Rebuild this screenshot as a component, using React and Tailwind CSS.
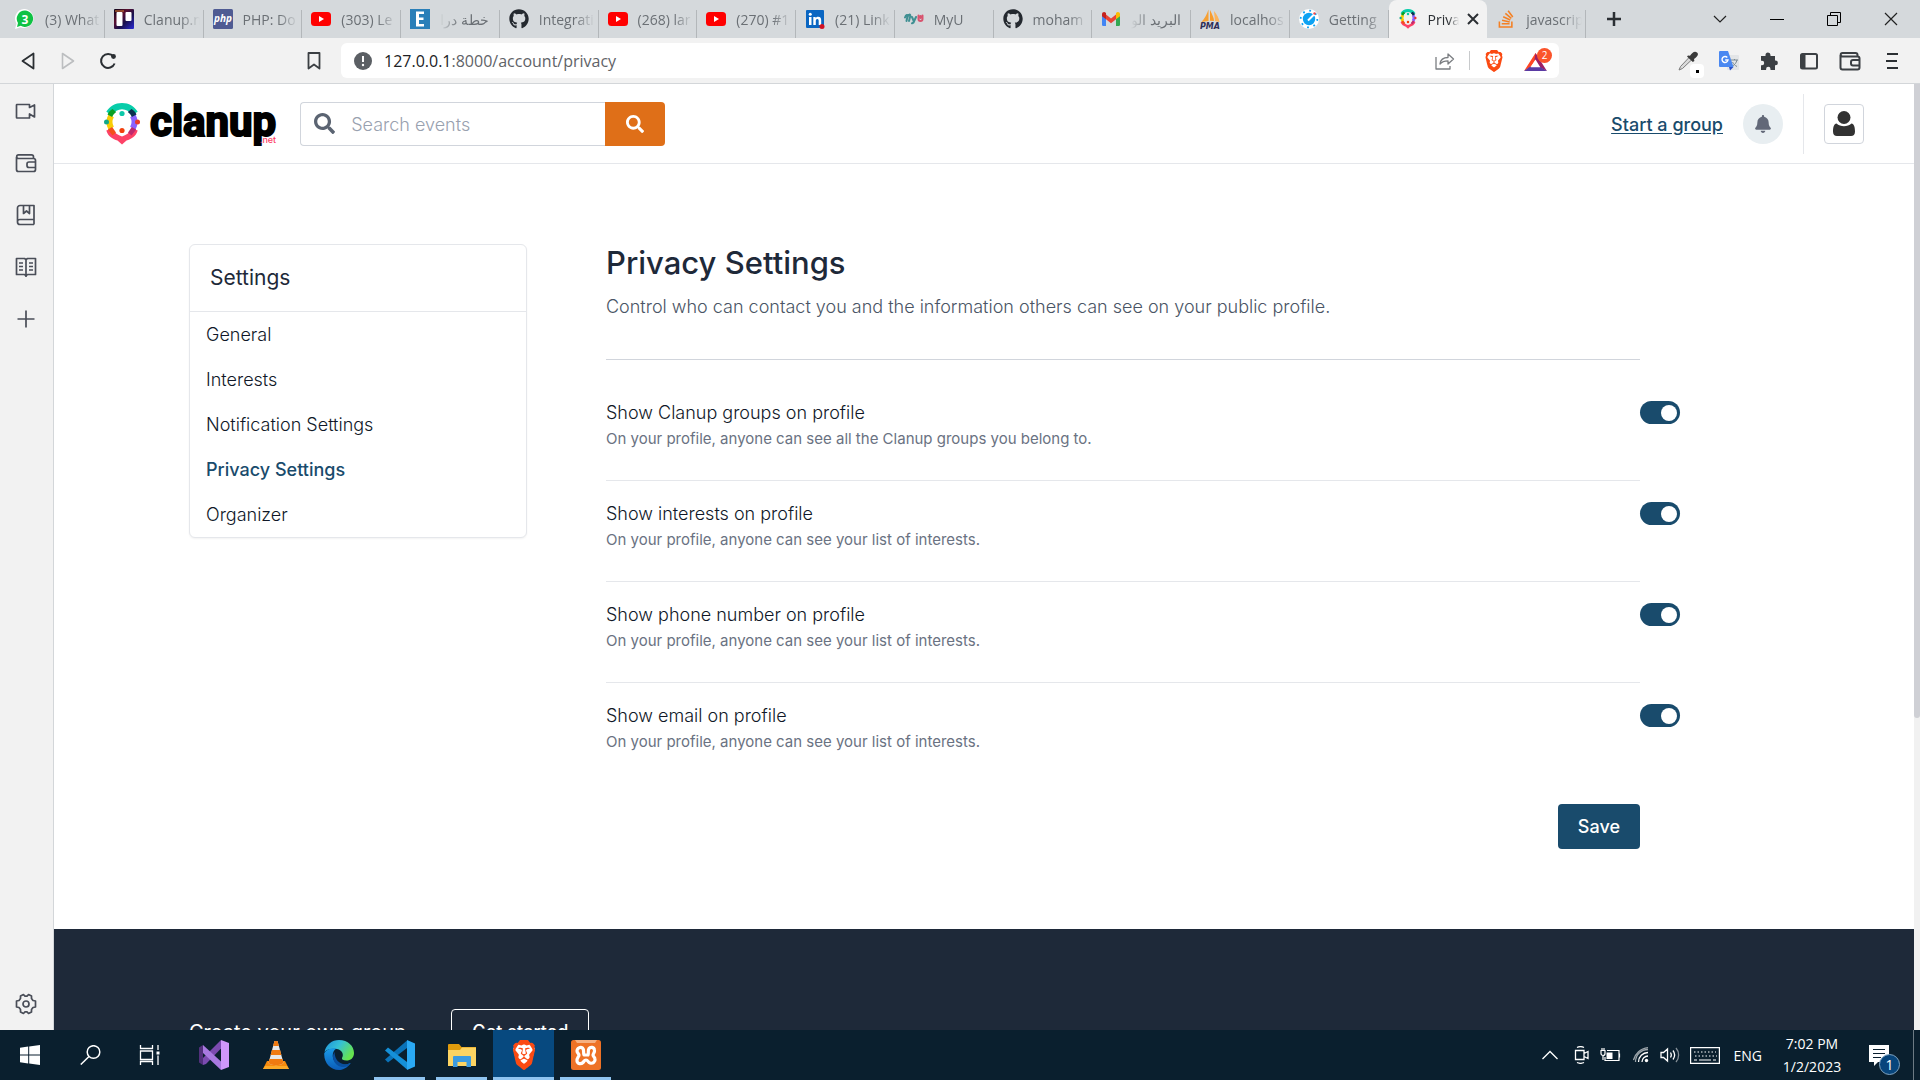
import React from 'react';
import { FaGithub, FaStackOverflow, FaSearch, FaBell } from 'react-icons/fa';
import { SiBrave } from 'react-icons/si';

/* ---------- brand marks ---------- */

function ClanupMark({ className }) {
  return (
    <svg viewBox="0 0 36 42" className={className} fill="none" aria-hidden="true">
      <path d="M7.200 12.800 A12.500 12.500 0 0 0 7.200 25.200" stroke="#f8cd05" strokeWidth="6" />
      <path d="M28.800 12.800 A12.500 12.500 0 0 1 28.800 25.200" stroke="#8a62ff" strokeWidth="6" />
      <path d="M2.300 8.800 C6 3 11 0 18 0 C25 0 30 3 33.700 8.800 L28 12 C25.500 8.500 22 6.200 18 6.200 C14 6.200 10.500 8.500 8 12Z" fill="#08cdaa" />
      <path d="M8.500 6 L12.200 9 C10 10.500 9.200 12 8.200 14 L3.500 11.500 C4.500 9 6.500 7 8.500 6Z" fill="#0b9f22" />
      <path d="M27.500 6 L23.800 9 C26 10.500 26.800 12 27.800 14 L32.500 11.500 C31.500 9 29.500 7 27.500 6Z" fill="#0a3050" />
      <path d="M2.300 27.500 L8 25.500 C10.500 30 14 32 18 33.500 C22 32 25.500 30 28 25.500 L33.700 27.500 C32 33.500 27 36 22.500 37.500 L18 41.500 L13.500 37.500 C9 36 4 33.500 2.300 27.500Z" fill="#fd4267" />
      <path d="M3.800 26.500 L8.200 24 L12 29.500 L8.500 32.500Z" fill="#f4501a" />
      <path d="M32.200 26.500 L27.800 24 L24 29.500 L27.500 32.500Z" fill="#bd2a6e" />
      <circle cx="2.500" cy="19" r="2.500" fill="#12a88a" />
      <circle cx="33.500" cy="19" r="2.500" fill="#ea3a2b" />
      <circle cx="18" cy="10.500" r="2.600" fill="#0cc8a8" />
      <circle cx="18" cy="27.500" r="2.600" fill="#f2400d" />
    </svg>
  );
}

const YouTube = () => (
  <svg viewBox="0 0 20 20" className="size-5">
    <rect y="3" width="20" height="14" rx="3.500" fill="#f00" />
    <path d="M8 7 L13 10 L8 13Z" fill="#fff" />
  </svg>
);

const WhatsApp = () => (
  <svg viewBox="0 0 20 20" className="size-5">
    <path d="M10 0 A9.500 9.500 0 1 1 5.500 18.300 L0 20 L1.500 14.500 A9.500 9.500 0 0 1 10 0Z" fill="#fff" />
    <path d="M10 1.500 A8.200 8.200 0 1 1 5.800 16.800 L2 18 L3 14 A8.200 8.200 0 0 1 10 1.500Z" fill="#0fc244" />
    <text x="10" y="14.500" textAnchor="middle" fontSize="12" fontWeight="700" fill="#fff" fontFamily="Open Sans, sans-serif">3</text>
  </svg>
);

const Trello = () => (
  <svg viewBox="0 0 20 20" className="size-5">
    <defs>
      <linearGradient id="trello" x1="0" y1="0" x2="1" y2="1">
        <stop offset="0" stopColor="#0a0418" />
        <stop offset=".35" stopColor="#5a1030" />
        <stop offset=".6" stopColor="#18104a" />
        <stop offset="1" stopColor="#2a2bd8" />
      </linearGradient>
    </defs>
    <rect width="20" height="20" rx="1" fill="url(#trello)" />
    <path d="M1 1h9v2H1z" fill="#c46a2d" opacity=".6" />
    <rect x="2.500" y="3" width="6" height="14" rx="1" fill="#fff" />
    <rect x="11.500" y="3" width="6" height="9" rx="1" fill="#fff" />
  </svg>
);

const Php = () => (
  <svg viewBox="0 0 20 20" className="size-5">
    <rect width="20" height="20" rx="1.500" fill="#4f5b93" />
    <text x="10" y="13" textAnchor="middle" fontSize="10" fontWeight="700" fontStyle="italic" fill="#fff" fontFamily="Open Sans, sans-serif">php</text>
  </svg>
);

const EIcon = () => (
  <svg viewBox="0 0 20 20" className="size-5">
    <rect width="20" height="20" fill="#2a7fb8" />
    <path d="M6 2.500h8v2.500H9v3.500h4.500V11H9v4h5v2.500H6z" fill="#fff" />
  </svg>
);

const LinkedIn = () => (
  <svg viewBox="0 0 20 20" className="size-5">
    <rect x="1" y="1" width="18" height="18" rx="1" fill="#0a66c2" />
    <path d="M4 8h2.500v8H4zM8.300 8h2.400v1.200c.5-.9 1.400-1.400 2.500-1.400 2.300 0 3 1.500 3 3.600V16h-2.500v-4c0-1-.2-2-1.300-2s-1.600.8-1.600 2v4H8.300z" fill="#fff" />
    <circle cx="5.250" cy="5.300" r="1.500" fill="#fff" />
    <circle cx="17" cy="17.500" r="2.500" fill="#d11124" />
  </svg>
);

const MyU = () => (
  <svg viewBox="0 0 20 20" className="size-5" fill="none" strokeLinecap="round" strokeLinejoin="round">
    <path d="M1 8.500c1-3 3-3.500 2.500-1L2.500 12M3.500 8c1.500-3.500 3.500-3 2.500 0l-1 4M8 8l1.500 3.500M12 8l-2.500 5.500-1.500.8" stroke="#3f8f92" strokeWidth="2" />
    <path d="M14.500 6.500v3.500a2 2 0 0 0 4 0V6.500M16.500 7v2" stroke="#d8546f" strokeWidth="2" />
  </svg>
);

const Gmail = () => (
  <svg viewBox="0 0 20 20" className="size-5">
    <path d="M1 5h4v12H2.200A1.200 1.200 0 0 1 1 15.800z" fill="#4285f4" />
    <path d="M15 5h4v10.800a1.200 1.200 0 0 1-1.200 1.200H15z" fill="#34a853" />
    <path d="M5 5.500l5 4 5-4v4.800l-5 4-5-4z" fill="#ea4335" />
    <path d="M1 5.500C1 3.200 3.200 2.500 4.700 3.700L5 4v6.300L1 7.300z" fill="#c5221f" />
    <path d="M19 5.500c0-2.300-2.200-3-3.700-1.800L15 4v6.300l4-3z" fill="#fbbc04" />
  </svg>
);

const Pma = () => (
  <svg viewBox="0 0 20 20" className="size-5">
    <path d="M8.500 0.500 L8.500 12 L1.500 13 C5 9 7 5 8.500 .5Z" fill="#f7a133" />
    <path d="M10 1 C12 5 14 9 14 12 L10 11.800Z" fill="#f89c2c" />
    <path d="M14 2 C17 6 19 9 19.500 13 L15 12Z" fill="#fbb45c" />
    <text x="10" y="19.500" textAnchor="middle" fontSize="8" fontWeight="700" fontStyle="italic" fill="#2f2f57" fontFamily="DejaVu Sans, sans-serif">PMA</text>
  </svg>
);

const Getting = () => (
  <svg viewBox="0 0 20 20" className="size-5">
    <circle cx="10" cy="10" r="10" fill="#fff" />
    <circle cx="10" cy="10" r="6.200" fill="#0da2f2" />
    <circle cx="10" cy="10" r="8.300" fill="none" stroke="#0da2f2" strokeWidth="1.800" strokeDasharray="1.800 4.720" />
    <path d="M9 11.500 L15.500 5" stroke="#fff" strokeWidth="2" />
    <circle cx="15.500" cy="4.500" r="1.200" fill="#f24a4a" />
  </svg>
);

/* ---------- browser window ---------- */

const tabs = [
  { icon: <WhatsApp />, title: '(3) What' },
  { icon: <Trello />, title: 'Clanup.n' },
  { icon: <Php />, title: 'PHP: Do' },
  { icon: <YouTube />, title: '(303) Le' },
  { icon: <EIcon />, title: 'خطة درا', rtl: true },
  { icon: <FaGithub className="size-5 text-[#24292f]" />, title: 'Integrati' },
  { icon: <YouTube />, title: '(268) lar' },
  { icon: <YouTube />, title: '(270) #1' },
  { icon: <LinkedIn />, title: '(21) Link' },
  { icon: <MyU />, title: 'MyU' },
  { icon: <FaGithub className="size-5 text-[#24292f]" />, title: 'moham' },
  { icon: <Gmail />, title: 'البريد الو', rtl: true },
  { icon: <Pma />, title: 'localhos' },
  { icon: <Getting />, title: 'Getting' },
  { icon: <ClanupMark className="size-5" />, title: 'Priva', active: true },
  { icon: <FaStackOverflow className="size-5 text-[#f48024]" />, title: 'javascrip' },
];

function Tab({ icon, title, rtl, active }) {
  const shell = active
    ? 'bg-[#f2f2f2] text-[#2b2f33] rounded-t-lg'
    : 'text-[#6b7075]';
  const fade = rtl
    ? '[mask-image:linear-gradient(to_left,black_65%,transparent)]'
    : '[mask-image:linear-gradient(to_right,black_65%,transparent)]';
  return (
    <div className={`flex h-full min-w-0 flex-1 basis-0 items-center ${shell}`}>
      <button type="button" className="flex h-full min-w-0 flex-1 items-center gap-[10px] pl-[9px] text-left">
        <span className="shrink-0">{icon}</span>
        <span dir={rtl ? 'rtl' : 'ltr'} className={`min-w-0 flex-1 overflow-hidden whitespace-nowrap text-[14px] ${fade}`}>{title}</span>
      </button>
      {active ? (
        <button type="button" aria-label="Close tab" className="px-2">
          <svg viewBox="0 0 12 12" className="size-3" stroke="#2b2f33" strokeWidth="2"><path d="M1 1l10 10M11 1L1 11" /></svg>
        </button>
      ) : (
        <span className="ml-[3px] h-7 w-px self-end bg-[#b3b7ba]" />
      )}
    </div>
  );
}

function TabStrip() {
  return (
    <div className="flex h-[38px] shrink-0 items-center bg-[#d5d9dc]">
      <div className="ml-[6px] flex h-full max-w-[1580px] flex-1">
        {tabs.map((t, i) => <Tab key={i} {...t} />)}
      </div>
      <button type="button" aria-label="New tab" className="ml-5">
        <svg viewBox="0 0 16 16" className="size-4" stroke="#2b2f33" strokeWidth="2.500"><path d="M8 1v14M1 8h14" /></svg>
      </button>
      <div className="ml-auto flex items-center gap-[43px] pr-[22px]">
        <button type="button" aria-label="Search tabs">
          <svg viewBox="0 0 14 14" className="size-[14px]" fill="none" stroke="#222" strokeWidth="1.200"><path d="M1 4l6 6 6-6" /></svg>
        </button>
        <button type="button" aria-label="Minimize">
          <svg viewBox="0 0 14 14" className="size-[14px]" stroke="#000"><path d="M0 7.500h14" /></svg>
        </button>
        <button type="button" aria-label="Restore">
          <svg viewBox="0 0 14 14" className="size-[14px]" fill="none" stroke="#000"><path d="M.5 3.500h10v10H.5zM3.500 3.500v-3h10v10h-3" /></svg>
        </button>
        <button type="button" aria-label="Close">
          <svg viewBox="0 0 14 14" className="size-[14px]" stroke="#222" strokeWidth="1.200"><path d="M1 1l12 12M13 1L1 13" /></svg>
        </button>
      </div>
    </div>
  );
}

function AddressBar() {
  return (
    <div className="flex h-[46px] shrink-0 items-center border-b border-[#d3d6d9] bg-[#f2f2f2]">
      <button type="button" aria-label="Back" className="ml-[21px]">
        <svg viewBox="0 0 14 18" className="h-[18px] w-[14px]" fill="none" stroke="#2b2f33" strokeWidth="1.800" strokeLinejoin="round"><path d="M12.500 1.500v15L1.500 9z" /></svg>
      </button>
      <button type="button" aria-label="Forward" className="ml-[26px]">
        <svg viewBox="0 0 14 18" className="h-[18px] w-[14px]" fill="none" stroke="#bcbec0" strokeWidth="1.600" strokeLinejoin="round"><path d="M1.500 1.500v15L12.500 9z" /></svg>
      </button>
      <button type="button" aria-label="Reload" className="ml-[24px]">
        <svg viewBox="0 0 18 18" className="size-[18px]" fill="none" stroke="#2b2f33" strokeWidth="2"><path d="M14.500 4.500A7 7 0 1 0 15.600 11.500" /><circle cx="14.500" cy="4.500" r="2.400" fill="#2b2f33" stroke="none" /></svg>
      </button>
      <button type="button" aria-label="Bookmark" className="ml-[190px]">
        <svg viewBox="0 0 14 18" className="h-[18px] w-[14px]" fill="none" stroke="#3b3f43" strokeWidth="1.800" strokeLinejoin="round"><path d="M1.500 1h11v15.500L7 12.500l-5.500 4z" /></svg>
      </button>
      <div className="ml-[20px] flex h-[35px] max-w-[1218px] flex-1 items-center rounded-md bg-white pl-[13px] pr-[3px]">
        <svg viewBox="0 0 18 18" className="size-[18px] shrink-0"><circle cx="9" cy="9" r="9" fill="#5b5f64" /><path d="M9 4v6" stroke="#fff" strokeWidth="2" /><circle cx="9" cy="13" r="1.200" fill="#fff" /></svg>
        <button type="button" aria-label="Address" className="ml-3 flex-1 text-left text-[16px] text-[#5f6368]">
          <span className="text-[#202124]">127.0.0.1</span>:8000/account/privacy
        </button>
        <button type="button" aria-label="Share">
          <svg viewBox="0 0 20 18" className="h-[18px] w-5" fill="none" stroke="#7a7d81" strokeWidth="1.300" strokeLinejoin="round"><path d="M1 5v12h14v-3M5 12c.5-4 3-6.500 8-6.500V2l5.500 5-5.500 5V8.800c-4 0-6.200 1-8 3.200z" /></svg>
        </button>
        <span className="ml-[14px] h-[19px] w-px bg-[#c8cacc]" />
        <button type="button" aria-label="Brave Shields" className="ml-[14px]">
          <Brave className="h-[22px] w-5" />
        </button>
        <button type="button" aria-label="Rewards, 2 new" className="relative ml-[20px] mr-[4px] h-[24px] w-[28px]">
          <svg viewBox="0 0 24 21" className="mt-[2px] h-[20px] w-[23px]"><path d="M12 1L17 8.500 12 8.500 6.500 16 0 20z" fill="#ff4724" /><path d="M12 1l12 19-7.500-4L11 8z" fill="#9e1f63" /><path d="M0 20l6-4.500h11L24 20z" fill="#5a3aa3" /><path d="M12 8l5 8H7z" fill="#fff" /></svg>
          <span className="absolute -top-[1px] right-0 flex size-[15px] items-center justify-center rounded-full bg-[#fb542b] text-[10px] text-white">2</span>
        </button>
      </div>
      <div className="ml-auto flex items-center gap-5 pr-[21px]">
        <button type="button" aria-label="Color picker" className="relative mr-[1px] size-5">
          <svg viewBox="0 0 20 20" className="size-5"><path d="M11.500 6L2.500 15.500 1 19l3.500-1.500L14 8.500z" fill="#d9d9d9" stroke="#7b7b7b" /><path d="M10 4.500l2 .3C14 2 16.500-.5 19 1.500s-.5 4.700-3 6.500l.4 2L14.800 11 9 5.500z" fill="#3a3a3a" /></svg>
          <span className="absolute left-[12px] top-[13px] flex h-[14px] w-[14px] items-end justify-center rounded bg-white pb-[5px]"><span className="size-[3px] bg-black" /></span>
        </button>
        <button type="button" aria-label="Google Translate">
          <svg viewBox="0 0 20 20" className="size-5"><rect x="8" y="4" width="12" height="15" rx="1" fill="#e3e5e7" /><path d="M12 9h7M15.500 8v1M18 9c-.7 3-2.500 5-4.500 6M13.500 11c1 2 2.500 3.500 4.500 4.500" stroke="#7b8a93" fill="none" /><path d="M1 0h8l5.500 16H1a1 1 0 0 1-1-1V1a1 1 0 0 1 1-1z" fill="#4a88f1" /><path d="M10 16h4.500L11 19.500z" fill="#2b50c8" /><path d="M8.300 6.500A3 3 0 1 0 9 9H6.200" stroke="#fff" strokeWidth="1.400" fill="none" /></svg>
        </button>
        <button type="button" aria-label="Extensions">
          <svg viewBox="0 0 20 20" className="size-5" fill="#3b3f43"><path d="M2 5h4.500V4a2.500 2.500 0 0 1 5 0v1H16v4.500h.5a2.400 2.400 0 0 1 0 4.800H16V19h-4.500v-1a2.200 2.200 0 0 0-4.400 0v1H2v-4.800h1a2.200 2.200 0 0 0 0-4.400H2z" /></svg>
        </button>
        <button type="button" aria-label="Side panel">
          <svg viewBox="0 0 20 20" className="size-5" fill="none" stroke="#3b3f43" strokeWidth="2"><rect x="2" y="3" width="16" height="14.500" rx="1.500" /><path d="M2 3h4.500v14.500H2z" fill="#3b3f43" stroke="none" /></svg>
        </button>
        <button type="button" aria-label="Wallet"><WalletIcon className="size-[22px] text-[#3b3f43]" strokeWidth="2" /></button>
        <button type="button" aria-label="Menu" className="ml-[4px]">
          <svg viewBox="0 0 14 18" className="h-[18px] w-[14px]" stroke="#2b2f33" strokeWidth="1.800"><path d="M2 2h11M1 9h11M2 16h11" /></svg>
        </button>
      </div>
    </div>
  );
}

function Brave({ className }) {
  return (
    <svg viewBox="0 0 24 24" preserveAspectRatio="none" className={className}>
      <path d="M4.500 3h15l2.500 4-3.500 12L12 23 5.500 19 2 7z" fill="#fff" />
      <SiBrave size={24} color="#fb4a12" />
    </svg>
  );
}

function WalletIcon({ className, strokeWidth }) {
  return (
    <svg viewBox="0 0 22 22" className={className} fill="none" stroke="currentColor" strokeWidth={strokeWidth} strokeLinejoin="round">
      <path d="M1.500 5v12.500a2 2 0 0 0 2 2h15a2 2 0 0 0 2-2v-9a2 2 0 0 0-2-2H3.500a1.800 1.800 0 0 1 0-3.600h13a2 2 0 0 1 2 2v1.600" />
      <path d="M20.500 10h-6.500a2 2 0 0 0-2 2v1.500a2 2 0 0 0 2 2h6.500" />
    </svg>
  );
}

function SideRail() {
  const common = { viewBox: '0 0 22 22', className: 'size-[22px]', fill: 'none', stroke: '#4a4e58', strokeWidth: 1.7, strokeLinejoin: 'round' };
  return (
    <nav aria-label="Browser sidebar" className="flex w-[54px] shrink-0 flex-col items-center border-r border-[#d3d6d9] bg-[#f2f2f2] pb-[15px] pr-[2px] pt-4">
      <div className="flex flex-col gap-[30px]">
        <button type="button" aria-label="Talk"><svg {...common}><path d="M2 4.500h12.500v3L19.500 5v12l-5-3v4H2a.5.500 0 0 1-.5-.5V5a.5.500 0 0 1 .5-.5z" /></svg></button>
        <button type="button" aria-label="Wallet"><WalletIcon className="size-[22px] text-[#4a4e58]" strokeWidth="1.700" /></button>
        <button type="button" aria-label="Bookmarks"><svg {...common}><path d="M19 15.500V1.500H5A2.500 2.500 0 0 0 2.500 4v14A2.500 2.500 0 0 0 5 20.500h14M2.500 17.500c0-1 1-2 2.500-2h14v5M8.500 1.500v8L11.500 7l3 2.500v-8" /></svg></button>
        <button type="button" aria-label="Reading list"><svg {...common}><path d="M11 3v18M1.500 2.500h8l1.500 1 1.500-1h8v16h-8l-1.500 1.500-1.500-1.500h-8zM4 7h4M4 10.500h4M4 14h4M14 7h4M14 10.500h4M14 14h4" /></svg></button>
        <button type="button" aria-label="Add"><svg {...common}><path d="M11 2.500v17M2.500 11h17" /></svg></button>
      </div>
      <button type="button" aria-label="Settings" className="mt-auto">
        <svg {...common}><path d="M8.500 1.500l1.500 1.700h2L13.500 1.500l3 1.500v2.500l1.500 2 2.500.5V14l-2.500.5-1.500 2V19l-3 1.500L12 18.800h-2L8.500 20.500l-3-1.500v-2.500L4 14.500 1.500 14V8L4 7.500l1.500-2V3z" /><circle cx="11" cy="11" r="3" /></svg>
      </button>
    </nav>
  );
}

/* ---------- site ---------- */

function SiteHeader() {
  return (
    <header className="flex h-20 items-center border-b border-gray-200 bg-white px-[50px]">
      <a href="#home" className="flex items-center" aria-label="clanup.net">
        <ClanupMark className="h-[42px] w-9" />
        <span className="ml-[10px] grid">
          <span className="col-start-1 row-start-1 pb-1 font-[Roboto] text-[42px] font-bold leading-[42px] text-black [-webkit-text-stroke:2px_black]">clanup</span>
          <span className="col-start-1 row-start-1 self-end justify-self-end pb-px text-[9px] font-medium leading-[12px] text-[#fd4267]">.net</span>
        </span>
      </a>
      <form role="search" className="ml-6 flex h-[44px] w-[365px]">
        <div className="flex min-w-0 flex-1 items-center rounded-l border border-r-0 border-gray-300">
          <FaSearch className="ml-[13px] size-[21px] shrink-0 text-[#5b6472]" />
          <input aria-label="Search events" placeholder="Search events" className="ml-4 min-w-0 flex-1 pt-[2px] text-[18px] font-light text-gray-700 outline-none placeholder:text-gray-400" />
        </div>
        <button type="button" aria-label="Search" className="flex w-[60px] items-center justify-center rounded-r bg-[#df6f18] text-white">
          <FaSearch className="size-[18px]" />
        </button>
      </form>
      <div className="ml-auto flex items-center">
        <a href="#start" className="pt-[2px] text-[18px] font-medium text-[#194b6c] underline underline-offset-2">Start a group</a>
        <button type="button" aria-label="Notifications" className="ml-5 flex size-10 items-center justify-center rounded-full bg-[#e8eef1] text-[#626878]">
          <FaBell className="size-[18px]" />
        </button>
        <span className="ml-[20px] h-[60px] w-px bg-gray-200" />
        <button type="button" aria-label="Account" className="ml-[20px] flex size-10 items-center justify-center rounded border border-gray-300">
          <svg viewBox="0 0 24 26" className="h-[26px] w-6" fill="#323232"><circle cx="12" cy="6.500" r="6.500" /><path d="M4.500 12.500c4 3.500 11 3.500 15 0C22 13 23 16 23 20.500c0 3-1.500 4.500-4 4.500H5c-2.500 0-4-1.500-4-4.500C1 16 2 13 4.500 12.500z" /></svg>
        </button>
      </div>
    </header>
  );
}

const menu = ['General', 'Interests', 'Notification Settings', 'Privacy Settings', 'Organizer'];

function SettingsMenu() {
  return (
    <aside className="w-[338px] shrink-0 rounded-md border border-gray-200 bg-white shadow-xs">
      <h2 className="flex h-[67px] items-center border-b border-gray-200 px-5 text-[21px] text-gray-800">Settings</h2>
      <ul>
        {menu.map((item) => (
          <li key={item}>
            <a href="#settings" className={`flex h-[45px] items-center px-4 text-[18px] ${item === 'Privacy Settings' ? 'font-medium text-[#194b6c]' : 'font-light text-gray-900'}`}>{item}</a>
          </li>
        ))}
      </ul>
    </aside>
  );
}

const options = [
  { id: 'groups', title: 'Show Clanup groups on profile', text: 'On your profile, anyone can see all the Clanup groups you belong to.' },
  { id: 'interests', title: 'Show interests on profile', text: 'On your profile, anyone can see your list of interests.' },
  { id: 'phone', title: 'Show phone number on profile', text: 'On your profile, anyone can see your list of interests.' },
  { id: 'email', title: 'Show email on profile', text: 'On your profile, anyone can see your list of interests.' },
];

function PrivacyForm() {
  return (
    <form className="min-w-0 flex-1 pr-[99px]">
      <div className="mr-10 border-b border-gray-300 pb-[38px]">
        <h1 className="text-[31px] font-medium leading-[38px] text-gray-800">Privacy Settings</h1>
        <p className="mt-[11px] text-[18px] font-light leading-[28px] text-gray-600">Control who can contact you and the information others can see on your public profile.</p>
      </div>
      <div className="pt-5">
        {options.map((o) => (
          <div key={o.id} className="group flex items-start">
            <div className="h-[101px] min-w-0 flex-1 border-b border-gray-200 pt-5 group-last:border-b-0">
              <label htmlFor={o.id} className="block text-[18px] font-light leading-[26px] text-gray-900">{o.title}</label>
              <p className="text-[15px] leading-[26px] text-gray-500">{o.text}</p>
            </div>
            <label className="relative mt-[21px] flex h-[23px] w-10 shrink-0 items-center justify-end rounded-full bg-[#194b6c] pr-[3px]">
              <input id={o.id} type="checkbox" role="switch" defaultChecked className="sr-only" />
              <span className="size-4 rounded-full bg-white" />
            </label>
          </div>
        ))}
      </div>
      <div className="mr-10 mt-5 flex justify-end">
        <button type="button" className="h-[45px] rounded bg-[#194b6c] px-5 text-[18px] font-medium text-white">Save</button>
      </div>
    </form>
  );
}

function Site() {
  return (
    <main className="min-w-0 flex-1 overflow-hidden bg-white font-[Inter]">
      <SiteHeader />
      <div className="mx-auto flex max-w-[1590px] items-start gap-[79px] pb-20 pt-20">
        <SettingsMenu />
        <PrivacyForm />
      </div>
      <footer className="bg-gray-800 pb-20 pt-20 text-white">
        <div className="mx-auto flex max-w-[1590px] items-center gap-[45px]">
          <span className="text-[20px]">Create your own group</span>
          <button type="button" className="h-[45px] rounded border border-white px-5 text-[18px] font-medium">Get started</button>
        </div>
      </footer>
    </main>
  );
}

/* ---------- taskbar ---------- */

const StartIcon = () => <svg viewBox="0 0 20 20" className="size-5" fill="#fff"><path d="M0 2.800L8.200 1.600V9.500H0zM9.200 1.500L20 0v9.500H9.200zM0 10.500h8.200v7.900L0 17.200zM9.200 10.500H20V20L9.200 18.500z" /></svg>;
const FindIcon = () => <svg viewBox="0 0 21 20" className="h-5 w-[21px]" fill="none" stroke="#fff" strokeWidth="1.500"><circle cx="13.500" cy="7" r="6.300" /><path d="M9 11.500L.8 19.500" /></svg>;
const TaskView = () => <svg viewBox="0 0 21 20" className="h-5 w-[21px]" fill="none" stroke="#fff" strokeWidth="1.300"><path d="M1.500 0v3.500h12V0M1.500 6h12v8.500h-12zM1.500 20v-3.500h12V20M19 0v5M19 10.500V20" /><path d="M17.500 6.500h3v3h-3z" fill="#fff" stroke="none" /></svg>;
const VisualStudio = () => <svg viewBox="0 0 30 30" className="size-[30px]"><path d="M0 7.500L4 5v20l-4-2.500z" fill="#52307c" /><path d="M4 25l3-1L22 8.500V0L4 18z" fill="#7b4bb0" /><path d="M4 5l18 16.500V30L4 13z" fill="#a879e0" /><path d="M22 0l8 3v24l-8 3z" fill="#cf97fb" /></svg>;
const Vlc = () => <svg viewBox="0 0 26 30" className="h-[30px] w-[26px]"><path d="M4 21h18l4 8H0z" fill="#f78a0b" /><path d="M2 26h22l2 3H0z" fill="#fba928" /><path d="M11.500 1h3l6 22c-3 3-12 3-15 0z" fill="#e8e8e8" /><path d="M11.500 1h3l1.400 5h-5.800zM8.900 10h8.200l1.300 5H7.600zM6.500 19h13l1 4c-3 3-12 3-15 0z" fill="#f07a10" /></svg>;
const Edge = () => (
  <svg viewBox="0 0 30 30" className="size-[30px]">
    <defs>
      <linearGradient id="edgeTop" x1="0" y1="0" x2="1" y2=".5"><stop offset="0" stopColor="#1b8fdc" /><stop offset=".5" stopColor="#35c1d6" /><stop offset="1" stopColor="#66e34f" /></linearGradient>
      <linearGradient id="edgeLow" x1="0" y1="0" x2="0" y2="1"><stop offset="0" stopColor="#1a9be8" /><stop offset="1" stopColor="#0b5cb8" /></linearGradient>
    </defs>
    <path d="M.5 12C2 4.500 8 0 15 0c9 0 15 6 15 13 0 5-3.500 7.500-7.500 7.500-3.500 0-5-1.200-4.500-2.500 2-3 .5-8-5-9C8 8.200 3 9 .5 12z" fill="url(#edgeTop)" />
    <path d="M.3 13C2.500 9 8 7.500 12.500 8.500 8 11 8 17 10 20c3 5 9 6.500 16.500 3C23 28.500 18 30 15 30 6 30-.5 22.500.3 13z" fill="url(#edgeLow)" />
    <path d="M10.500 12c-4 6 .5 15 9 15 3 0 5.500-1.500 7.500-4-9 3.500-16-1-16.500-11z" fill="#0a4f9e" />
  </svg>
);
const VsCode = () => <svg viewBox="0 0 30 30" className="size-[30px]"><path d="M22 .5L0 19.500l3 3L22 8z" fill="#0a72b8" /><path d="M22 29.500L0 10.500l3-3L22 22z" fill="#1590d8" /><path d="M22 0l8 3.500v23L22 30z" fill="#2aa9f4" /></svg>;
const Explorer = () => <svg viewBox="0 0 28 26" className="h-[26px] w-7"><path d="M0 3a1 1 0 0 1 1-1h10l2.500 3H28v6H0z" fill="#e09b0c" /><path d="M0 8h12l2-2.500h14V24H0z" fill="#fcd462" /><path d="M5 15a1 1 0 0 1 1-1h16a1 1 0 0 1 1 1v10h-4.500v-5h-9v5H5z" fill="#3b9be0" /></svg>;
const Xampp = () => (
  <svg viewBox="0 0 30 30" className="size-[30px]" fill="none">
    <rect width="30" height="30" rx="2.500" fill="#ee7226" />
    <path d="M4 0h22l-2 3H6z" fill="#f6b081" />
    <path d="M13 15 C12 12.500 13.500 10 11.500 8 C9.500 6.500 6 8 6 11 C6 13 8 13.500 8 15 C8 17 5.500 18 6 21 C6.500 24 10 24.500 12 22.500 C13.500 21 13 20 15 20 C17 20 17 22.500 19 23 C22 24 24.500 21.500 24 19 C23.700 17 22 16.500 22 15 C22 13.500 24 12.500 23.500 10 C23 7 19.500 6.500 18 8.500 C16.500 10.500 18 13 17 15Z" stroke="#fff" strokeWidth="3.200" strokeLinejoin="round" />
  </svg>
);

const apps = [
  { name: 'Start', icon: <StartIcon />, w: 'w-[60px]' },
  { name: 'Search', icon: <FindIcon />, w: 'w-[60px]' },
  { name: 'Task View', icon: <TaskView />, w: 'w-[59px]' },
  { name: 'Visual Studio', icon: <VisualStudio />, w: 'w-[70px]' },
  { name: 'VLC', icon: <Vlc />, w: 'w-[54px]' },
  { name: 'Edge', icon: <Edge />, w: 'w-[71px]' },
  { name: 'VS Code', icon: <VsCode />, w: 'w-[51px]', open: true },
  { name: 'Explorer', icon: <Explorer />, w: 'w-[51px]', open: true },
  { name: 'Brave', icon: <Brave className="h-[30px] w-[26px]" />, w: 'w-[61px]', open: true, current: true },
  { name: 'XAMPP', icon: <Xampp />, w: 'w-[51px]', open: true },
];

function Taskbar() {
  return (
    <footer className="flex h-[50px] shrink-0 items-stretch bg-[#0a1f2e] text-white">
      {apps.map((a) => (
        <button
          key={a.name}
          type="button"
          aria-label={a.name}
          className={`flex items-center justify-center ${a.w} ${a.open ? 'border-b-[3px] border-[#8fc4f0] pt-[3px]' : ''} ${a.current ? 'mx-[6px] bg-[#07497f]' : ''} ${a.name === 'Explorer' ? 'ml-[11px]' : ''}`}
        >
          {a.icon}
        </button>
      ))}
      <div className="ml-auto flex items-center pr-[6px]">
        <button type="button" aria-label="Hidden icons"><svg viewBox="0 0 16 10" className="h-[10px] w-4" fill="none" stroke="#fff" strokeWidth="1.300"><path d="M.5 9L8 1.500 15.500 9" /></svg></button>
        <button type="button" aria-label="Meet Now" className="ml-[16px]"><svg viewBox="0 0 15 18" className="h-[18px] w-[15px]" fill="none" stroke="#fff" strokeWidth="1.300"><path d="M1.500 4.500h8.500v9H1.500zM10 7.500l4-2v7l-4-2M3 1.500c2-1 5-1 7 0M3 16.500c2 1 5 1 7 0" /></svg></button>
        <button type="button" aria-label="Battery" className="ml-[11px]"><svg viewBox="0 0 21 14" className="h-[14px] w-[21px]" fill="none" stroke="#fff" strokeWidth="1.200"><path d="M7 2.500h12v10H5V9M19.500 5.500v4M1 2.500h4v3a2 2 0 0 1-4 0zM2 0v2M4 0v2M3 7.500V12" /><path d="M6.500 4.500h6v6.500h-6z" fill="#fff" stroke="none" /></svg></button>
        <button type="button" aria-label="Wi-Fi" className="ml-[12px]"><svg viewBox="0 0 16 16" className="size-4" fill="none" stroke="#fff" strokeWidth="1.300"><path d="M9 15a6 6 0 0 1 6-6M5.500 15A9.500 9.500 0 0 1 15 5.500" /><path d="M2.500 15A12.500 12.500 0 0 1 15 2.500M.5 13C2 7 7 1.500 15 .7" opacity=".6" /><circle cx="13.500" cy="13.500" r="1.700" fill="#fff" stroke="none" /></svg></button>
        <button type="button" aria-label="Volume" className="ml-[11px]"><svg viewBox="0 0 20 18" className="h-[18px] w-5" fill="none" stroke="#fff" strokeWidth="1.300"><path d="M1 6.500h2.500L7.500 3v12L3.500 11.500H1zM10.500 6.500c1 1.500 1 3.500 0 5M13 4.500c2.200 3 2.200 6 0 9" /><path d="M16 2c3.500 4 3.500 10 0 14" opacity=".5" /></svg></button>
        <button type="button" aria-label="Touch keyboard" className="ml-[10px]"><svg viewBox="0 0 30 17" className="h-[17px] w-[30px]" fill="none" stroke="#fff" strokeWidth="1.200"><path d="M.6.600h28.800v15.800H.6z" /><path d="M4 5h22M5 9h22" strokeDasharray="1.500 2" /><path d="M4 13h3M9 13h12M23 13h3" /></svg></button>
        <button type="button" className="ml-[14px] text-[14px]">ENG</button>
        <button type="button" className="ml-[18px] w-[64px] text-center text-[14px] leading-[23px]">7:02 PM<br />1/2/2023</button>
        <button type="button" aria-label="Notifications, 1 new" className="relative ml-[25px] mr-[13px] h-[34px] w-[31px]">
          <svg viewBox="0 0 20 22" className="mt-[2px] h-[22px] w-5"><path d="M0 0h20v17H9l-4 4v-4H0z" fill="#fff" /><path d="M4 4.500h12M4 8.500h12M4 12.500h8" stroke="#0a1f2e" strokeWidth="1.200" /></svg>
          <span className="absolute -bottom-[3px] right-0 flex size-[21px] items-center justify-center rounded-full border border-[#7fa3c0] bg-[#07457c] text-[14px]">1</span>
        </button>
        <span className="-mr-[6px] w-[7px] self-stretch border-l border-[#6c7a84]" />
      </div>
    </footer>
  );
}

export default function App() {
  return (
    <div className="flex h-screen flex-col overflow-hidden font-['Open_Sans','Noto_Sans',sans-serif]">
      <TabStrip />
      <AddressBar />
      <div className="flex min-h-0 flex-1">
        <SideRail />
        <Site />
        <div className="w-[6px] shrink-0 bg-[#f1f1f1]">
          <div className="h-[67%] rounded-b-[3px] bg-[#cfd0d5]" />
        </div>
      </div>
      <Taskbar />
    </div>
  );
}
